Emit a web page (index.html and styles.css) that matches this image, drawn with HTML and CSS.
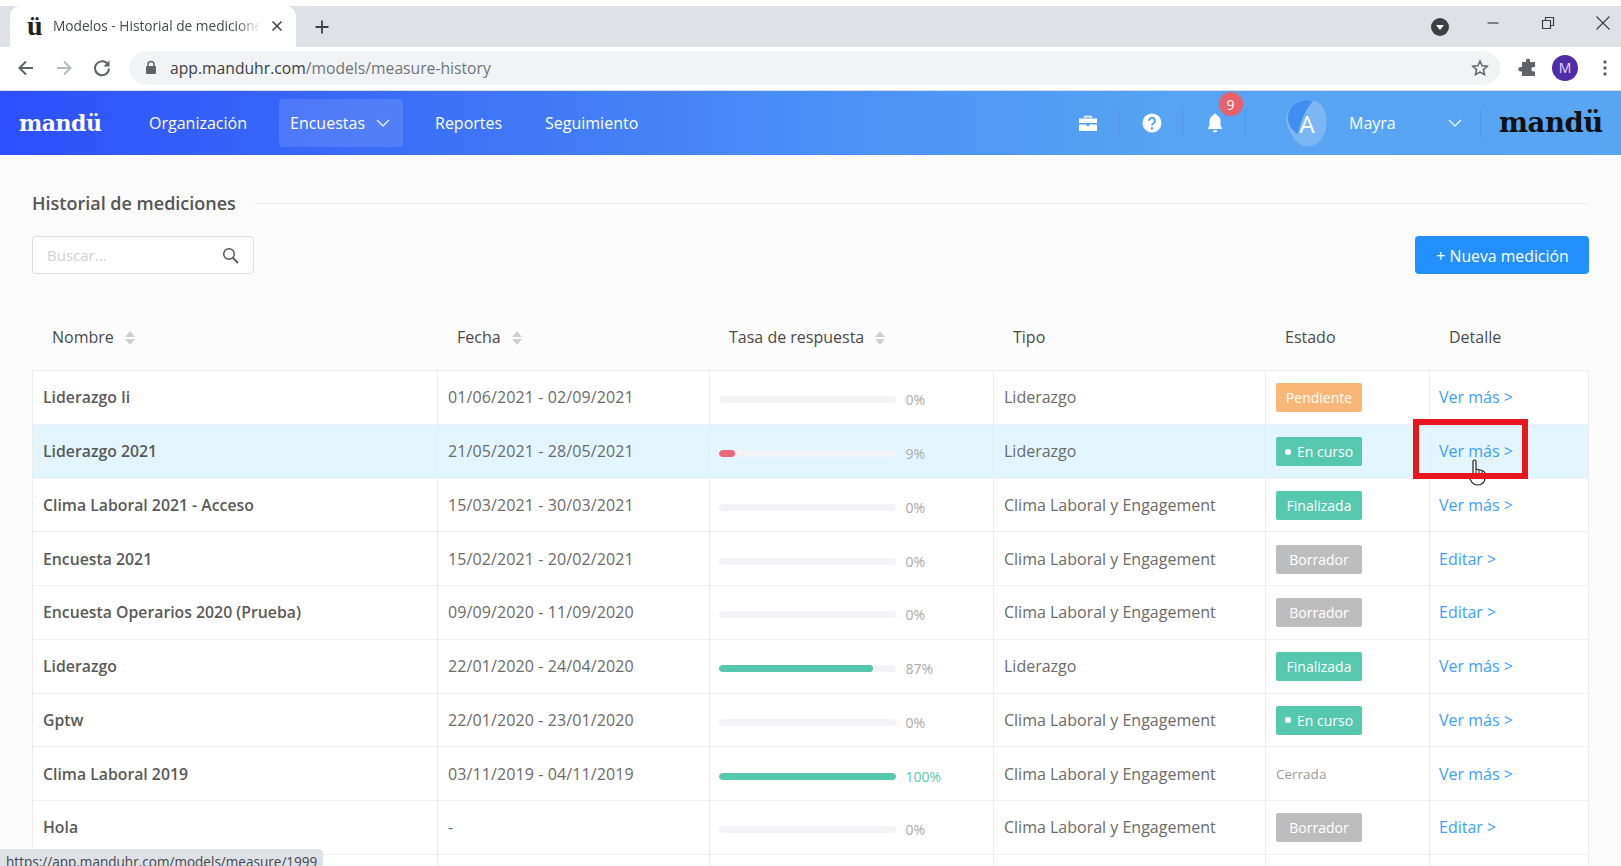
FILE: index.html
```html
<!DOCTYPE html>
<html lang="es">
<head>
<meta charset="utf-8">
<title>Modelos - Historial de mediciones</title>
<link rel="stylesheet" href="styles.css">
</head>
<body>
<div class="browser">
  <div class="tabstrip">
    <div class="tab">
      <span class="favicon">ü</span>
      <span class="tab-title">Modelos - Historial de mediciones</span>
      <svg class="tab-close" width="12" height="12" viewBox="0 0 12 12"><path d="M1.5 1.5l9 9M10.5 1.5l-9 9" stroke="#45484c" stroke-width="1.6" fill="none"/></svg>
    </div>
    <svg class="new-tab" width="16" height="16" viewBox="0 0 16 16"><path d="M8 1.5v13M1.5 8h13" stroke="#3c4043" stroke-width="1.8" fill="none"/></svg>
    <svg class="tab-search" width="18" height="18" viewBox="0 0 18 18"><circle cx="9" cy="9" r="9" fill="#3c4043"/><path d="M5 7h8l-4 5z" fill="#fff"/></svg>
    <div class="window-controls">
      <svg width="14" height="14" viewBox="0 0 14 14"><path d="M1.5 7h11" stroke="#3c4043" stroke-width="1.2"/></svg>
      <svg width="14" height="14" viewBox="0 0 14 14"><path d="M1.500 4.500h8V12.500h-8zM4.500 4.500V1.500h8v8H9.500" stroke="#3c4043" stroke-width="1.2" fill="none"/></svg>
      <svg width="14" height="14" viewBox="0 0 14 14"><path d="M.5.5l13 13M13.500.5l-13 13" stroke="#3c4043" stroke-width="1.2" fill="none"/></svg>
    </div>
  </div>
  <div class="toolbar">
    <svg class="tool" width="20" height="20" viewBox="0 0 20 20"><path d="M17 10H4M10 3.5L3.5 10l6.500 6.500" stroke="#5f6368" stroke-width="2" fill="none"/></svg>
    <svg class="tool" width="20" height="20" viewBox="0 0 20 20"><path d="M3 10h13M10 3.500l6.500 6.500-6.500 6.500" stroke="#b5b8bc" stroke-width="2" fill="none"/></svg>
    <svg class="tool" width="20" height="20" viewBox="0 0 20 20"><path d="M16.200 7A7 7 0 1 0 17 10.500" stroke="#5f6368" stroke-width="2" fill="none"/><path d="M17.500 2.500v6h-6z" fill="#5f6368"/></svg>
    <div class="omnibox">
      <svg width="12" height="15" viewBox="0 0 12 15"><path d="M3 6.500V4.500a3 3 0 0 1 6 0v2" stroke="#5f6368" stroke-width="1.500" fill="none"/><rect x="1" y="6" width="10" height="8" rx="1.200" fill="#5f6368"/></svg>
      <span class="url"><span class="url-host">app.manduhr.com</span>/models/measure-history</span>
      <svg class="star" width="18" height="18" viewBox="0 0 18 18"><path d="M9 2l2.100 4.700 5.100.5-3.800 3.400 1.100 5L9 13l-4.500 2.600 1.100-5L1.800 7.200l5.100-.5z" stroke="#5f6368" stroke-width="1.500" fill="none"/></svg>
    </div>
    <svg class="puzzle" width="20" height="20" viewBox="0 0 20 20"><path d="M8 2.500a2 2 0 0 1 4 0V4h5v5h-1.500a2.200 2.200 0 0 0 0 4.400H17V18H4v-4.600H2.500a2.200 2.200 0 0 1 0-4.400H4V4h4z" fill="#5f6368"/></svg>
    <span class="profile">M</span>
    <svg class="dots" width="4" height="16" viewBox="0 0 4 16"><circle cx="2" cy="2" r="1.700" fill="#5f6368"/><circle cx="2" cy="8" r="1.700" fill="#5f6368"/><circle cx="2" cy="14" r="1.700" fill="#5f6368"/></svg>
  </div>
</div>

<header class="nav">
  <span class="logo">mandü</span>
  <a class="nav-link nav-org">Organización</a>
  <a class="nav-link nav-active">Encuestas
    <svg width="14" height="8" viewBox="0 0 14 8"><path d="M1 1l6 6 6-6" stroke="#fff" stroke-width="1.200" fill="none"/></svg>
  </a>
  <a class="nav-link nav-rep">Reportes</a>
  <a class="nav-link nav-seg">Seguimiento</a>
  <div class="nav-right">
    <span class="nav-icon">
      <svg width="18" height="16" viewBox="0 0 18 16"><path d="M6 3V1.500h6V3" stroke="#fff" stroke-width="1.500" fill="none"/><path d="M0 3.500h18V8H0zM0 9.500h7.500v1.500h3V9.500H18V16H0z" fill="#fff"/></svg>
    </span>
    <span class="nav-icon">
      <svg width="20" height="20" viewBox="0 0 20 20"><circle cx="10" cy="10" r="9.500" fill="#fff"/><path d="M7 7.800a3 3 0 1 1 4.600 2.500c-1 .6-1.600 1.100-1.600 2.300" stroke="#4f9cf4" stroke-width="1.900" fill="none"/><circle cx="10" cy="15.200" r="1.200" fill="#4f9cf4"/></svg>
    </span>
    <span class="nav-icon bell">
      <svg width="16" height="20" viewBox="0 0 16 20"><path d="M8 .5a1.500 1.500 0 0 1 1.500 1.700C12.300 3 13.500 5.300 13.500 8v4.500L15.500 16H.5l2-3.500V8c0-2.700 1.200-5 4-5.800A1.500 1.500 0 0 1 8 .5z" fill="#fff"/><path d="M5.800 17.200h4.400a2.200 2.200 0 0 1-4.400 0z" fill="#fff"/></svg>
      <span class="bell-count">9</span>
    </span>
    <div class="user">
      <span class="avatar">
        <svg width="50" height="50" viewBox="0 0 50 50"><path d="M10 8C16 1 30 0 37 5c8 6 9 20 6 29-3 10-12 16-21 14C13 45 9 37 5 27 3 19 5 13 10 8z" fill="#7db6f5"/><path d="M8 11C13 3 24 1 31 3 24 10 18 24 16 36 8 32 3 21 8 11z" fill="#3f8ff0"/></svg>
        <span class="avatar-letter">A</span>
      </span>
      <span class="user-name">Mayra</span>
      <svg class="user-chevron" width="14" height="8" viewBox="0 0 14 8"><path d="M1 1l6 6 6-6" stroke="#fff" stroke-width="1.200" fill="none"/></svg>
    </div>
    <span class="logo logo-dark">mandü</span>
  </div>
</header>

<main class="page">
  <div class="title-row">
    <h1 class="title">Historial de mediciones</h1>
    <span class="title-rule"></span>
  </div>
  <div class="actions">
    <div class="search">
      <span class="search-hint">Buscar...</span>
      <svg width="17" height="17" viewBox="0 0 17 17"><circle cx="7" cy="7" r="5.300" stroke="#555" stroke-width="1.500" fill="none"/><path d="M11 11l5 5" stroke="#555" stroke-width="1.800"/></svg>
    </div>
    <button class="primary">+ Nueva medición</button>
  </div>

  <div class="table">
    <div class="row head">
      <div class="th">Nombre <span class="sort"></span></div>
      <div class="th">Fecha <span class="sort"></span></div>
      <div class="th">Tasa de respuesta <span class="sort"></span></div>
      <div class="th">Tipo</div>
      <div class="th">Estado</div>
      <div class="th">Detalle</div>
    </div>

    <div class="row">
      <div class="td name">Liderazgo Ii</div><div class="td date">01/06/2021 - 02/09/2021</div>
      <div class="td prog"><span class="bar"><i class="fill" style="width:0%"></i></span><span class="pct">0%</span></div>
      <div class="td">Liderazgo</div>
      <div class="td"><span class="badge orange">Pendiente</span></div>
      <div class="td"><a class="link">Ver más &gt;</a></div>
    </div>
    <div class="row hover">
      <div class="td name">Liderazgo 2021</div><div class="td date">21/05/2021 - 28/05/2021</div>
      <div class="td prog"><span class="bar"><i class="fill red" style="width:9%"></i></span><span class="pct">9%</span></div>
      <div class="td">Liderazgo</div>
      <div class="td"><span class="badge green"><b class="dot"></b>En curso</span></div>
      <div class="td detail"><a class="link">Ver más &gt;</a>
        <svg class="cursor" width="20" height="30" viewBox="0 0 20 30"><path d="M6 16V3.500a1.500 1.500 0 0 1 3 0V11l6 1.500c2 .6 3 1.600 3 3.500v4c0 4-3 7-7.500 7C7 27 5 25 3.500 22L1.500 17.500c-.6-1.500 1.500-2.500 2.500-1.200z" fill="#fff" stroke="#222" stroke-width="1.200"/><path d="M9 11v5M12 12v4M15 13v3" stroke="#222" stroke-width="1"/></svg>
        <span class="highlight"></span>
      </div>
    </div>
    <div class="row">
      <div class="td name">Clima Laboral 2021 - Acceso</div><div class="td date">15/03/2021 - 30/03/2021</div>
      <div class="td prog"><span class="bar"><i class="fill" style="width:0%"></i></span><span class="pct">0%</span></div>
      <div class="td">Clima Laboral y Engagement</div>
      <div class="td"><span class="badge green">Finalizada</span></div>
      <div class="td"><a class="link">Ver más &gt;</a></div>
    </div>
    <div class="row">
      <div class="td name">Encuesta 2021</div><div class="td date">15/02/2021 - 20/02/2021</div>
      <div class="td prog"><span class="bar"><i class="fill" style="width:0%"></i></span><span class="pct">0%</span></div>
      <div class="td">Clima Laboral y Engagement</div>
      <div class="td"><span class="badge grey">Borrador</span></div>
      <div class="td"><a class="link">Editar &gt;</a></div>
    </div>
    <div class="row">
      <div class="td name">Encuesta Operarios 2020 (Prueba)</div><div class="td date">09/09/2020 - 11/09/2020</div>
      <div class="td prog"><span class="bar"><i class="fill" style="width:0%"></i></span><span class="pct">0%</span></div>
      <div class="td">Clima Laboral y Engagement</div>
      <div class="td"><span class="badge grey">Borrador</span></div>
      <div class="td"><a class="link">Editar &gt;</a></div>
    </div>
    <div class="row">
      <div class="td name">Liderazgo</div><div class="td date">22/01/2020 - 24/04/2020</div>
      <div class="td prog"><span class="bar"><i class="fill" style="width:87%"></i></span><span class="pct">87%</span></div>
      <div class="td">Liderazgo</div>
      <div class="td"><span class="badge green">Finalizada</span></div>
      <div class="td"><a class="link">Ver más &gt;</a></div>
    </div>
    <div class="row">
      <div class="td name">Gptw</div><div class="td date">22/01/2020 - 23/01/2020</div>
      <div class="td prog"><span class="bar"><i class="fill" style="width:0%"></i></span><span class="pct">0%</span></div>
      <div class="td">Clima Laboral y Engagement</div>
      <div class="td"><span class="badge green"><b class="dot"></b>En curso</span></div>
      <div class="td"><a class="link">Ver más &gt;</a></div>
    </div>
    <div class="row">
      <div class="td name">Clima Laboral 2019</div><div class="td date">03/11/2019 - 04/11/2019</div>
      <div class="td prog"><span class="bar"><i class="fill" style="width:100%"></i></span><span class="pct done">100%</span></div>
      <div class="td">Clima Laboral y Engagement</div>
      <div class="td closed">Cerrada</div>
      <div class="td"><a class="link">Ver más &gt;</a></div>
    </div>
    <div class="row">
      <div class="td name">Hola</div><div class="td date">-</div>
      <div class="td prog"><span class="bar"><i class="fill" style="width:0%"></i></span><span class="pct">0%</span></div>
      <div class="td">Clima Laboral y Engagement</div>
      <div class="td"><span class="badge grey">Borrador</span></div>
      <div class="td"><a class="link">Editar &gt;</a></div>
    </div>
    <div class="row">
      <div class="td"></div><div class="td"></div><div class="td"></div><div class="td"></div><div class="td"></div><div class="td"></div>
    </div>
  </div>
</main>

<div class="status-link">https://app.manduhr.com/models/measure/1999</div>
</body>
</html>
```

FILE: styles.css
```css
* { box-sizing: border-box; }
html, body { margin: 0; height: 866px; overflow: hidden; }
body { font-family: "Open Sans", "Noto Sans", sans-serif; background: #fbfbfb; color: #666; position: relative; }

/* browser chrome */
.browser { background: #fff; padding-top: 6px; }
.tabstrip { height: 41px; background: #dee1e6; display: flex; align-items: center; padding-left: 10px; }
.tab { width: 286px; height: 41px; background: #fff; border-radius: 10px 10px 0 0; display: flex; align-items: center; padding-left: 17px; padding-bottom: 2px; }
.favicon { width: 26px; font: 700 28px/1 "Liberation Serif", serif; color: #222; }
.tab-title { width: 208px; font-size: 13.700px; color: #45484c; white-space: nowrap; overflow: hidden; -webkit-mask-image: linear-gradient(90deg, #000 88%, transparent); mask-image: linear-gradient(90deg, #000 88%, transparent); }
.tab-close { margin-left: 10px; }
.new-tab { margin-left: 18px; }
.tab-search { margin-left: 1101px; }
.window-controls { display: flex; gap: 41px; margin-left: 37px; margin-top: -8px; }
.toolbar { height: 44px; background: #fff; display: flex; align-items: center; padding-left: 16px; padding-bottom: 2px; border-bottom: 1px solid #d8dbe0; }
.tool { margin-right: 18px; }
.omnibox { width: 1371px; height: 34px; margin-left: -1px; background: #f1f3f4; border-radius: 17px; display: flex; align-items: center; padding-left: 16px; }
.url { margin-left: 13px; font-size: 15.700px; color: #70757a; }
.url-host { color: #3c4043; }
.star { margin-left: auto; margin-right: 11px; }
.puzzle { margin-left: 18px; }
.profile { width: 26px; height: 26px; margin-left: 14px; border-radius: 50%; background: #4f2ca8; color: #e6def7; font-size: 14px; display: flex; align-items: center; justify-content: center; }
.dots { margin-left: 25px; }

/* app nav */
.nav { height: 64px; display: flex; align-items: center; background: linear-gradient(90deg, #2d4ffb 0%, #4a8ff6 50%, #56a4f3 72%, #58a6f2 100%); color: #fff; }
.logo { font: 700 22px/1 "DejaVu Serif", serif; letter-spacing: -.5px; color: #fff; margin-left: 19px; width: 130px; }
.nav-link { font-size: 16px; color: #fff; white-space: nowrap; }
.nav-org { width: 130px; }
.nav-active { width: 124px; height: 48px; background: rgba(255,255,255,.12); border-radius: 4px; display: flex; align-items: center; gap: 11px; padding-left: 11px; }
.nav-rep { margin-left: 32px; width: 110px; }
.nav-right { margin-left: auto; display: flex; align-items: center; height: 100%; }
.nav-icon { width: 63.500px; height: 28px; padding-left: 3px; display: flex; align-items: center; justify-content: center; border-right: 1px solid rgba(50,90,170,.18); position: relative; }
.bell-count { position: absolute; top: -17px; left: 36px; width: 24px; height: 24px; border-radius: 50%; background: #e8606a; color: #fff; font-size: 14px; display: flex; align-items: center; justify-content: center; }
.user { width: 235px; height: 28px; display: flex; align-items: center; border-right: 1px solid rgba(50,90,170,.18); position: relative; }
.avatar { width: 50px; height: 50px; margin-left: 36px; position: relative; display: flex; align-items: center; justify-content: center; }
.avatar svg { position: absolute; left: 0; top: 0; }
.avatar-letter { position: relative; font-size: 24px; color: #fff; }
.user-name { margin-left: 17px; font-size: 16px; color: #fff; }
.user-chevron { margin-left: 52px; }
.logo-dark { color: #111; font-size: 27.500px; width: 140px; margin-left: 0; padding-left: 18px; }

/* page */
.page { padding: 0 32px; }
.title-row { display: flex; align-items: center; height: 34px; margin-top: 31px; }
.title { margin: 0; font-size: 18px; font-weight: 600; color: #555; white-space: nowrap; width: 222px; }
.title-rule { flex: 1; height: 1px; background: #ededed; }
.actions { display: flex; justify-content: space-between; margin-top: 16px; height: 38px; }
.search { width: 222px; height: 38px; background: #fff; border: 1px solid #ddd; border-radius: 4px; display: flex; align-items: center; justify-content: space-between; padding: 0 14px; }
.search-hint { font-size: 15px; color: #d0d0d0; }
.primary { width: 174px; height: 38px; border: 0; border-radius: 4px; background: #2490ff; color: #fff; padding: 1px 0 0 1px; font: 500 15.800px "Open Sans", sans-serif; }

.table { margin-top: 28px; background: #fff; }
.row { display: grid; grid-template-columns: 405px 272px 284px 272px 164px 160px; height: 53.750px; border-bottom: 1px solid #efeff2; }
.row.hover { background: #e3f5fe; }
.row.head { height: 69px; background: #fcfcfc; border-bottom: 1px solid #ececef; }
.th { display: flex; align-items: center; gap: 11px; padding-left: 20px; padding-top: 1px; font-size: 16px; font-weight: 500; color: #4a4a4a; }
.td { display: flex; align-items: center; padding-left: 10px; font-size: 16px; color: #6b6b6b; border-left: 1px solid #ececef; white-space: nowrap; }
.td:last-child { border-right: 1px solid #ececef; padding-left: 9px; }
.name { font-weight: 600; font-size: 15.800px; color: #5a5a5a; }
.date { letter-spacing: .11px; }
.sort { width: 10px; height: 14px; margin-top: 2px; display: inline-block; position: relative; }
.sort::before, .sort::after { content: ""; position: absolute; left: 0; border-left: 5px solid transparent; border-right: 5px solid transparent; }
.sort::before { top: 0; border-bottom: 6px solid #cfcfcf; }
.sort::after { bottom: 0; border-top: 6px solid #cfcfcf; }
.prog { gap: 10px; padding-left: 9px; }
.bar { width: 176.500px; height: 7px; margin-top: 5px; background: #f3f3f5; border-radius: 4px; overflow: hidden; display: block; }
.fill { display: block; height: 100%; background: #55c8ae; border-radius: 4px; }
.fill.red { background: #ec6a75; }
.pct { font-size: 14px; color: #aaa; margin-top: 5px; }
.pct.done { color: #55c8ae; }
.badge { width: 86px; height: 29px; margin-top: 1px; border-radius: 2px; color: #fff; font-size: 14px; font-weight: 500; display: flex; align-items: center; justify-content: center; }
.orange { background: #f8b777; }
.green { background: #55c8ae; }
.grey { background: #bdbdbd; }
.dot { width: 6px; height: 6px; border-radius: 50%; background: #fff; margin-right: 6px; }
.closed { font-size: 13.500px; color: #999; }
.link { font-size: 16px; color: #40a0ff; }
.detail { position: relative; }
.highlight { position: absolute; left: -17px; top: -6px; width: 115px; height: 60px; border: 6px solid #e8171d; }
.cursor { position: absolute; left: 37px; top: 33px; }

.status-link { position: absolute; left: 0; bottom: 0; width: 323px; height: 17px; background: #dee1e6; border-radius: 0 5px 0 0; padding-left: 6px; font-size: 13.550px; line-height: 26px; color: #45484c; white-space: nowrap; overflow: hidden; }
```
